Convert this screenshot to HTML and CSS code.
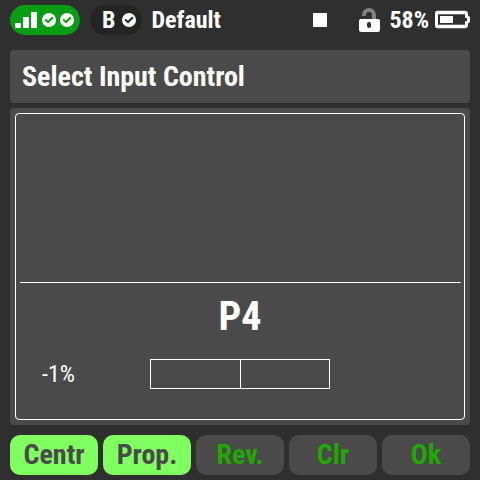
FILE: index.html
```html
<!DOCTYPE html>
<html lang="en">
<head>
<meta charset="utf-8">
<meta name="viewport" content="width=device-width, initial-scale=1">
<title>Select Input Control</title>
<link rel="stylesheet" href="styles.css">
</head>
<body>
<header class="status">
  <div class="pill pill-signal">
    <svg class="icon-signal" width="22" height="16" viewBox="0 0 22 16" aria-hidden="true"><rect x="0" y="11" width="6" height="5" rx="1"/><rect x="8" y="5" width="6" height="11" rx="1"/><rect x="16" y="0" width="6" height="16" rx="1"/></svg>
    <div class="checks">
      <svg class="icon-check" width="14" height="14" viewBox="0 0 14 14" aria-hidden="true"><circle cx="7" cy="7" r="7"/><path d="M3.200 6.600 6 9.200 10.800 4.200"/></svg>
      <svg class="icon-check" width="14" height="14" viewBox="0 0 14 14" aria-hidden="true"><circle cx="7" cy="7" r="7"/><path d="M3.200 6.600 6 9.200 10.800 4.200"/></svg>
    </div>
  </div>
  <div class="pill pill-model">
    <span>B</span>
    <svg class="icon-check" width="14" height="14" viewBox="0 0 14 14" aria-hidden="true"><circle cx="7" cy="7" r="7"/><path d="M3.200 6.600 6 9.200 10.800 4.200"/></svg>
  </div>
  <span class="profile">Default</span>
  <span class="stop"></span>
  <svg class="icon-lock" width="22" height="26" viewBox="0 0 22 26" aria-hidden="true"><path class="shackle" d="M6 9V8a5 5 0 0 1 10 0v5"/><rect x="1" y="12" width="21" height="13" rx="2"/><rect class="keyhole" x="9" y="15" width="4" height="6" rx="2"/></svg>
  <span class="charge">58%</span>
  <svg class="icon-battery" width="35" height="20" viewBox="0 0 35 20" aria-hidden="true"><path fill-rule="evenodd" d="M2.500 .7H30A3 3 0 0 1 33 3.700V5.500L35 7V12L33 13.500V15.300A3 3 0 0 1 30 18.300H2.500A2.500 2.500 0 0 1 0 15.800V3.200A2.500 2.500 0 0 1 2.500 .7ZM3 4.300V14.700H30V11.300H32V8H30V4.300Z"/><rect x="5" y="6" width="13" height="7"/></svg>
</header>
<h1 class="title">Select Input Control</h1>
<main class="panel">
  <section class="frame">
    <div class="list"></div>
    <div class="selected">
      <h2 class="name">P4</h2>
      <div class="reading">
        <span class="value">-1%</span>
        <div class="gauge"><span></span><span></span></div>
      </div>
    </div>
  </section>
</main>
<footer class="actions">
  <button class="active" type="button">Centr</button>
  <button class="active" type="button">Prop.</button>
  <button type="button">Rev.</button>
  <button type="button">Clr</button>
  <button type="button">Ok</button>
</footer>
</body>
</html>
```
FILE: styles.css
```css
* {
  box-sizing: border-box;
}

body {
  margin: 0;
  min-height: 100vh;
  padding: 5px 10px;
  display: flex;
  flex-direction: column;
  background: #2f2f2f;
  color: #fff;
  font-family: "Roboto Condensed", Roboto, sans-serif;
}

.status {
  display: flex;
  align-items: center;
  height: 30px;
  font-size: 24px;
  font-weight: 700;
  line-height: 30px;
}

.status svg {
  flex: none;
  fill: #fff;
}

.pill {
  display: flex;
  align-items: center;
  height: 30px;
  border-radius: 15px;
}

.pill-signal {
  gap: 5px;
  padding: 0 6px 0 5px;
  background: #079c12;
  color: #079c12;
}

.checks {
  display: flex;
  gap: 4px;
}

.pill-model {
  gap: 7px;
  margin-left: 10px;
  padding: 0 6px 0 12px;
  background: #232523;
}

.pill-model .icon-check {
  color: #232523;
}

.icon-check path {
  fill: none;
  stroke: currentColor;
  stroke-width: 2;
}

.profile {
  margin-left: 9px;
}

.stop {
  width: 14px;
  height: 14px;
  margin-left: auto;
  margin-right: 31px;
  background: #fff;
}

.icon-lock .shackle {
  fill: none;
  stroke: #808080;
  stroke-width: 4;
}

.icon-lock .keyhole {
  fill: #2f2f2f;
}

.charge {
  margin: 0 6px 0 9px;
}

.title {
  margin: 15px 0 5px;
  padding: 10px 12px;
  border-radius: 4px;
  background: #4a4a4a;
  font-size: 28px;
  line-height: 33px;
}

.panel {
  flex: 1;
  display: flex;
  padding: 5px;
  border-radius: 4px;
  background: #4a4a4a;
}

.frame {
  flex: 1;
  display: flex;
  flex-direction: column;
  padding: 4px 3px 4px 4px;
  border: 1px solid #fff;
  border-radius: 4px;
}

.list {
  flex: 1;
}

.selected {
  padding: 11px 1px 0 0;
  border-top: 1px solid #fff;
}

.name {
  margin: 0;
  text-align: center;
  font-size: 40px;
  line-height: 46px;
}

.reading {
  display: grid;
  grid-template-columns: 1fr 180px 1fr;
  align-items: center;
  margin: 19px 0 26px;
}

.value {
  padding-left: 22px;
  font-size: 24px;
  line-height: 30px;
}

.gauge {
  display: flex;
  height: 30px;
  border: 1px solid #fff;
}

.gauge span {
  flex: 1;
}

.gauge span + span {
  border-left: 1px solid #fff;
}

.actions {
  display: grid;
  grid-template-columns: repeat(5, 1fr);
  gap: 5px;
  margin-top: 10px;
}

.actions button {
  height: 40px;
  padding: 0 0 2px;
  border: 0;
  border-radius: 10px;
  background: #4a4a4a;
  color: #20a800;
  font: inherit;
  font-size: 28px;
  font-weight: 700;
}

.actions .active {
  background: #80ff60;
  color: #4a4a4a;
}
```
